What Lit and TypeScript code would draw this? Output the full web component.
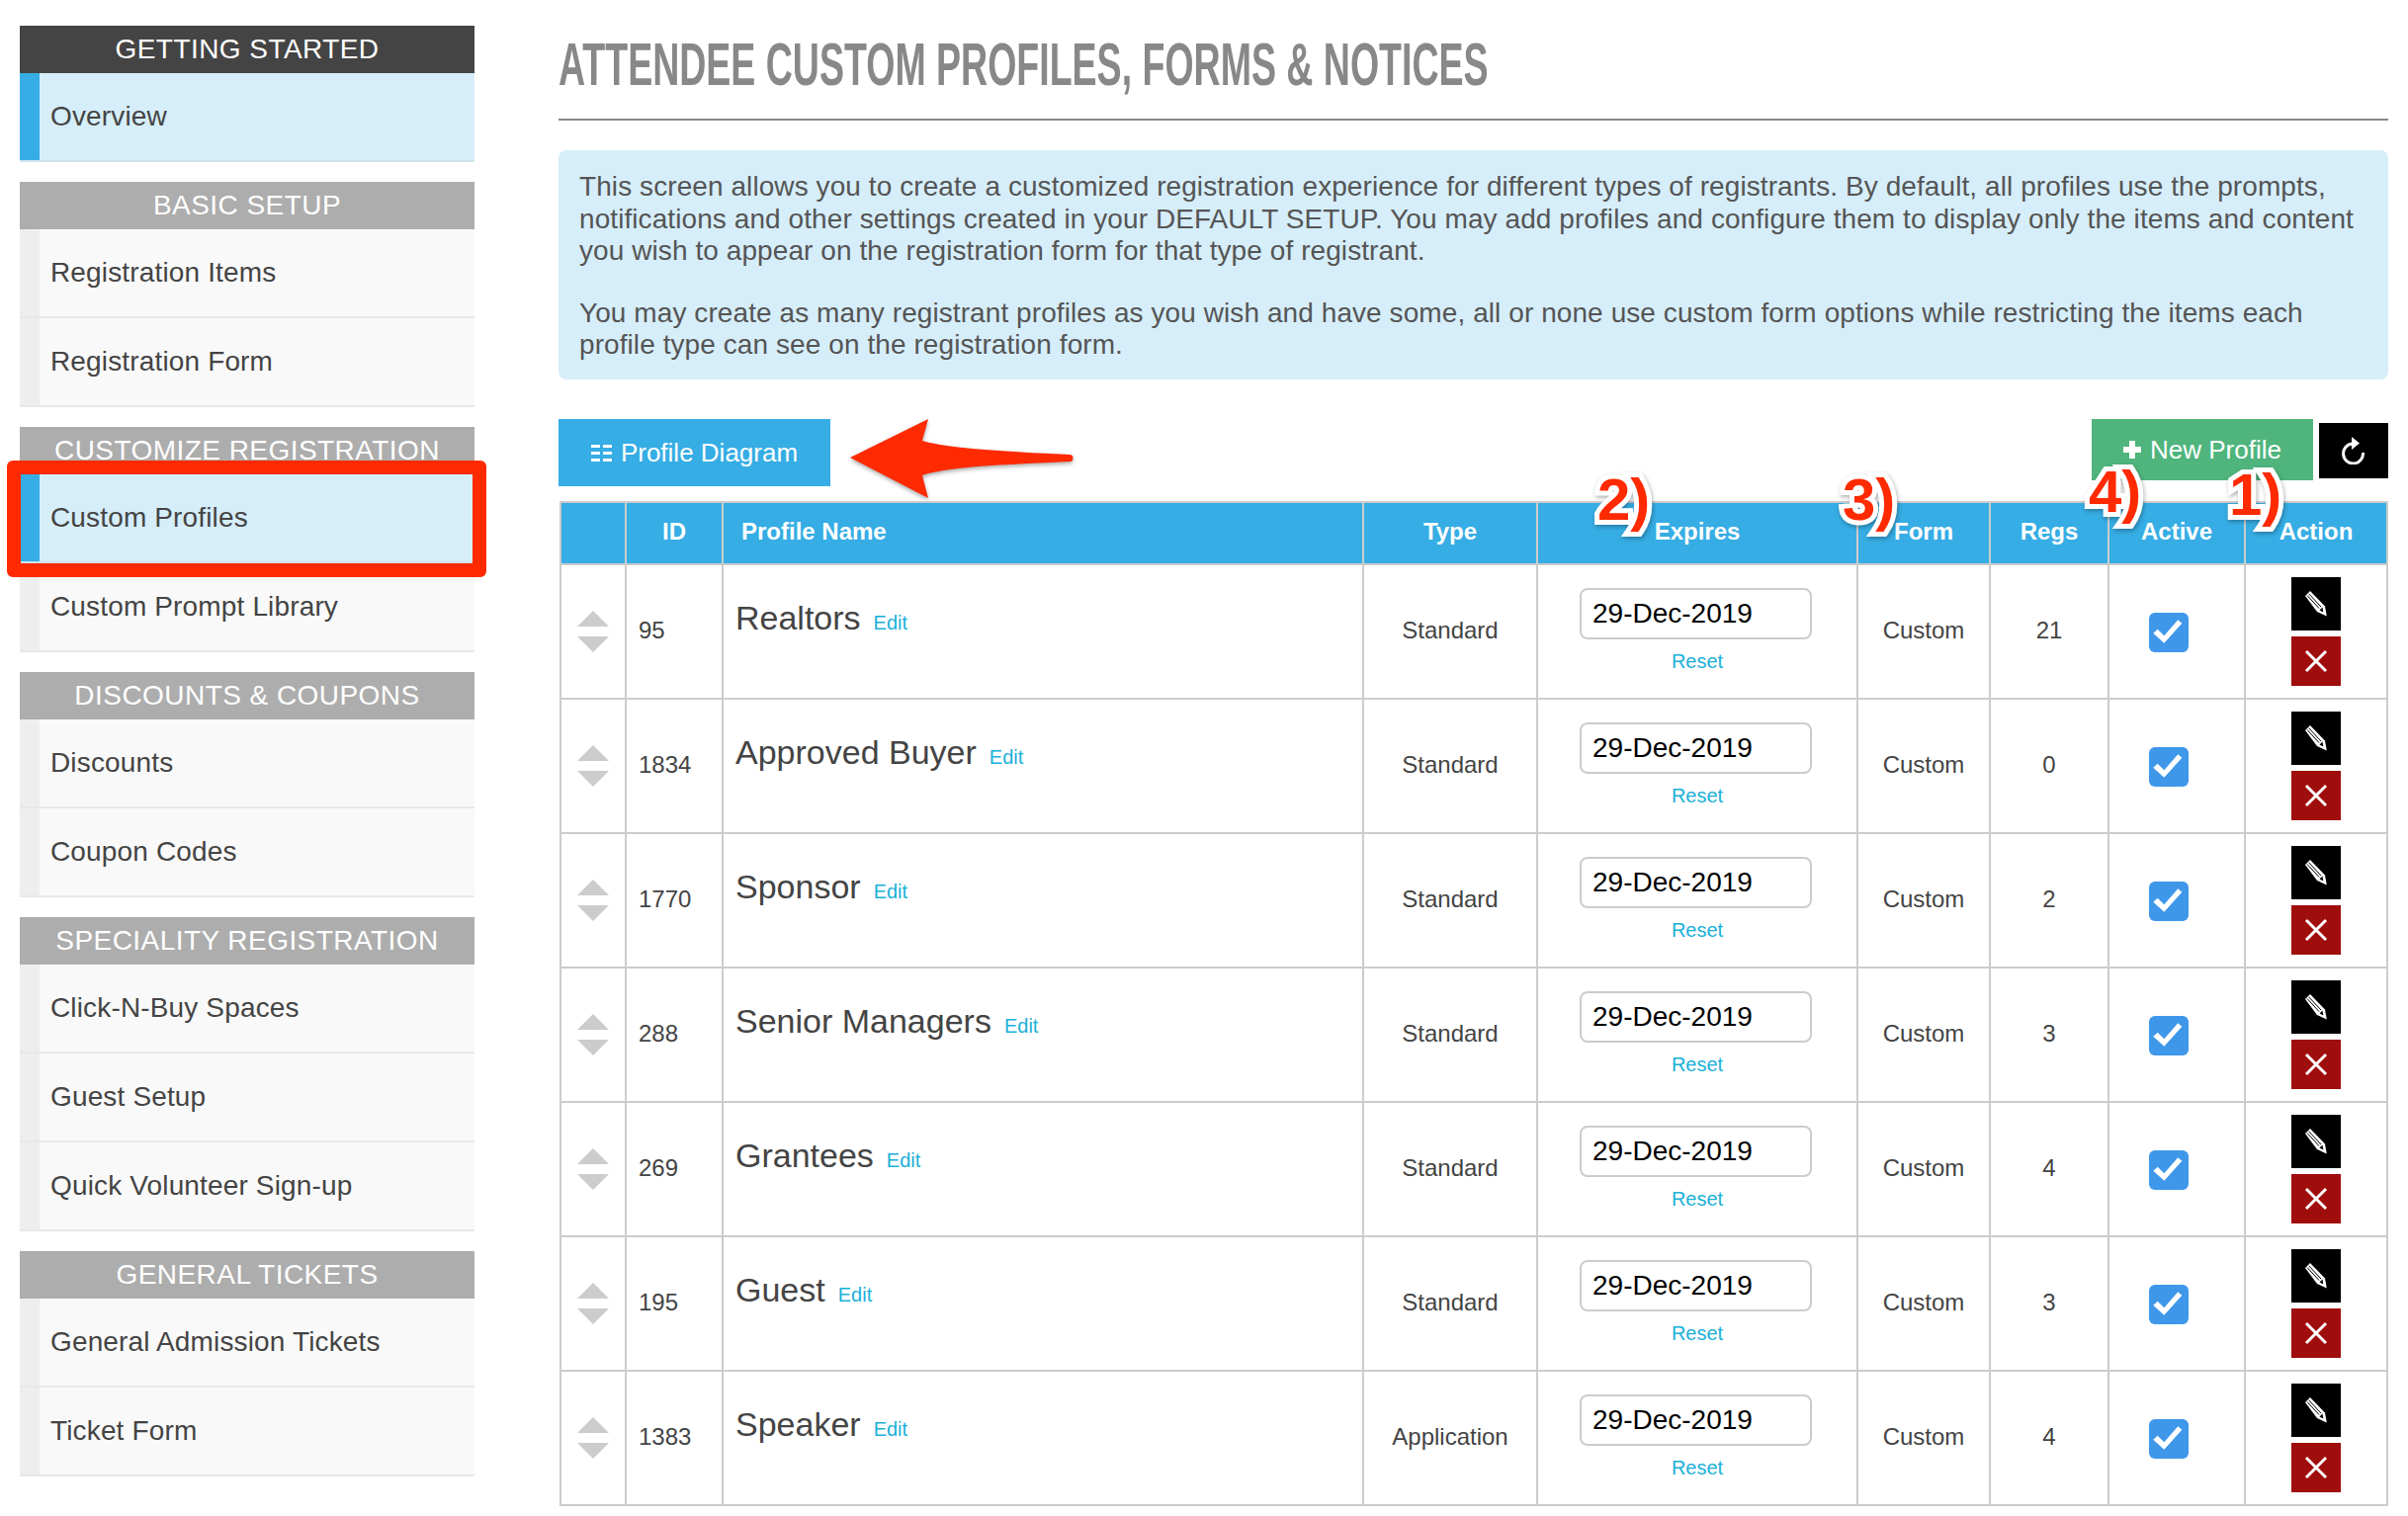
import { LitElement, html, css, svg } from "lit";
import { customElement } from "lit/decorators.js";

const groups = [
  { title: "GETTING STARTED", dark: true, items: [{ t: "Overview", on: true }] },
  { title: "BASIC SETUP", items: [{ t: "Registration Items" }, { t: "Registration Form" }] },
  { title: "CUSTOMIZE REGISTRATION", items: [{ t: "Custom Profiles", on: true, mark: true }, { t: "Custom Prompt Library" }] },
  { title: "DISCOUNTS & COUPONS", items: [{ t: "Discounts" }, { t: "Coupon Codes" }] },
  { title: "SPECIALITY REGISTRATION", items: [{ t: "Click-N-Buy Spaces" }, { t: "Guest Setup" }, { t: "Quick Volunteer Sign-up" }] },
  { title: "GENERAL TICKETS", items: [{ t: "General Admission Tickets" }, { t: "Ticket Form" }] },
] as { title: string; dark?: boolean; items: { t: string; on?: boolean; mark?: boolean }[] }[];

const rows = [
  ["95", "Realtors", "Standard", "21"],
  ["1834", "Approved Buyer", "Standard", "0"],
  ["1770", "Sponsor", "Standard", "2"],
  ["288", "Senior Managers", "Standard", "3"],
  ["269", "Grantees", "Standard", "4"],
  ["195", "Guest", "Standard", "3"],
  ["1383", "Speaker", "Application", "4"],
];

const pencil = svg`<svg width="22" height="26" viewBox="0 0 22 26"><path d="M0 5L5 0 20 15.5 21.8 25.5 12 21z" fill="#fff"/><path d="M2 4.5L14 17.5M3.7 2.8L16 16" stroke="#000" stroke-width="1" fill="none"/><path d="M14.5 19.5L17.5 16.5 18.3 21.5z" fill="#000"/></svg>`;
const cross = svg`<svg width="24" height="24" viewBox="0 0 24 24"><path d="M2 2l20 20M22 2L2 22" stroke="#fff" stroke-width="3"/></svg>`;
const check = svg`<svg width="40" height="40" viewBox="0 0 40 40"><path d="M8.7 16.7L15.3 23.3 29.3 7.3 33.3 10.7 15.3 30.7 4.3 20.7z" fill="#fff"/></svg>`;

@customElement("app-root")
export class AppRoot extends LitElement {
  static styles = css`
    :host { display: block; width: 2436px; height: 1534px; overflow: hidden; background: #fff; font-family: "Liberation Sans", Arial, sans-serif; color: #444; }
    .page { display: flex; gap: 85px; padding: 26px 20px 0; align-items: flex-start; }
    .side { width: 460px; flex: none; display: flex; flex-direction: column; gap: 20px; }
    .ghead { height: 48px; background: #adadad; color: #fff; font-size: 28px; line-height: 48px; text-align: center; letter-spacing: .45px; white-space: nowrap; }
    .ghead.dark { background: #444; }
    .item { position: relative; height: 90px; box-sizing: border-box; display: flex; align-items: center; background: #f9f9f9; border-bottom: 2px solid #e8e8e8; box-shadow: inset 20px 0 0 #eee; padding-left: 31px; font-size: 28px; letter-spacing: .15px; color: #444; }
    .item.on { background: #d6eefa; box-shadow: inset 20px 0 0 #36ade4; border-bottom-color: #d0e3ee; }
    .mark { position: absolute; z-index: 1; left: -13px; top: -14px; right: -12px; bottom: -16px; border: 14px solid #ff2a00; border-radius: 6px; }
    .main { flex: 1; min-width: 0; }
    h1 { margin: 0; height: 96px; box-sizing: border-box; border-bottom: 2px solid #888; font: 700 62px/77px "Liberation Sans", sans-serif; color: #888; white-space: nowrap; }
    h1 span { display: inline-block; transform-origin: left center; transform: scaleX(.605); }
    .info { margin-top: 30px; height: 232px; box-sizing: border-box; background: #d6eefa; border-radius: 8px; padding: 21px 20px 0 21px; font-size: 28px; line-height: 32.5px; letter-spacing: .08px; color: #555; }
    .info p { margin: 0 0 30px; }
    .bar { position: relative; margin-top: 40px; height: 83px; display: flex; align-items: flex-start; }
    .btn { display: flex; align-items: center; justify-content: center; gap: 9px; color: #fff; font-size: 26px; box-sizing: border-box; }
    .diagram { width: 275px; height: 68px; background: #36ade4; }
    .spacer { flex: 1; }
    .newp { width: 224px; height: 62px; background: #4fb57d; }
    .reload { width: 70px; height: 56px; margin-left: 6px; margin-top: 4px; background: #000; display: flex; align-items: center; justify-content: center; }
    .arrow { position: absolute; left: 285px; top: -4px; filter: drop-shadow(0 2px 2px rgba(0,0,0,.35)); }
    .tw { position: relative; margin-left: 1px; }
    table { border-collapse: separate; border-spacing: 0; table-layout: fixed; width: 1850px; border-left: 2px solid #ccc; border-top: 2px solid #ccc; }
    th { background: #36ade4; color: #fff; font-size: 24px; font-weight: 700; height: 63px; padding: 0 0 3px; box-sizing: border-box; border-right: 2px solid #ccc; border-bottom: 2px solid #ccc; text-align: center; }
    th.l { text-align: left; padding-left: 18px; }
    td { height: 136px; padding: 0 0 2px; box-sizing: border-box; border-right: 2px solid #ccc; border-bottom: 2px solid #ccc; text-align: center; font-size: 24px; color: #444; }
    .sort { display: flex; flex-direction: column; align-items: center; gap: 10px; margin-top: 2px; }
    .up { width: 0; height: 0; border: 16px solid transparent; border-top: 0; border-bottom-color: #ccc; }
    .dn { width: 0; height: 0; border: 16px solid transparent; border-bottom: 0; border-top-color: #ccc; }
    td.id { text-align: left; padding-left: 12px; }
    td.name { text-align: left; padding: 0 0 24px 12px; font-size: 34px; line-height: 40px; }
    a { color: #1ab0d8; font-size: 20px; text-decoration: none; }
    td.name a { margin-left: 13px; }
    .date { width: 235px; height: 52px; box-sizing: border-box; margin: 0 0 0 42px; border: 2px solid #ccc; border-radius: 8px; color: #000; font-size: 28px; line-height: 48px; text-align: left; padding-left: 11px; }
    .reset { display: block; margin-top: 9px; line-height: 26px; }
    .box { width: 40px; height: 40px; border-radius: 6px; background: #3f97ea; margin: 4px 0 0 40px; }
    .box svg { display: block; }
    .acts { display: flex; flex-direction: column; align-items: center; gap: 6px; margin-top: 2px; }
    .act { width: 50px; display: flex; align-items: center; justify-content: center; }
    .edit { height: 54px; background: #000; }
    .del { height: 50px; background: #a00d0d; }
    .note { position: absolute; font-size: 60px; line-height: 60px; font-weight: 700; color: #ff2a00; -webkit-text-stroke: 10px #fff; paint-order: stroke fill; filter: drop-shadow(1px 2px 2px rgba(0,0,0,.3)); pointer-events: none; }
  `;

  render() {
    return html`<div class="page">
      <nav class="side">
        ${groups.map((g) => html`<section>
          <div class="ghead ${g.dark ? "dark" : ""}">${g.title}</div>
          ${g.items.map((i) => html`<div class="item ${i.on ? "on" : ""}">${i.t}${i.mark ? html`<div class="mark"></div>` : ""}</div>`)}
        </section>`)}
      </nav>
      <main class="main">
        <h1><span>ATTENDEE CUSTOM PROFILES, FORMS &amp; NOTICES</span></h1>
        <div class="info">
          <p>This screen allows you to create a customized registration experience for different types of registrants. By default, all profiles use the prompts, notifications and other settings created in your DEFAULT SETUP. You may add profiles and configure them to display only the items and content you wish to appear on the registration form for that type of registrant.</p>
          <p>You may create as many registrant profiles as you wish and have some, all or none use custom form options while restricting the items each profile type can see on the registration form.</p>
        </div>
        <div class="bar">
          <div class="btn diagram">
            <svg width="21" height="17" viewBox="0 0 21 17"><path d="M0 0h9v3H0zM12 0h9v3h-9zM0 7h9v3H0zM12 7h9v3h-9zM0 14h9v3H0zM12 14h9v3h-9z" fill="#fff"/></svg>
            Profile Diagram
          </div>
          <svg class="arrow" width="240" height="84" viewBox="0 0 240 84"><path d="M10 43L89 4 83 26C110 34 170 37 232 40a3.5 3.5 0 0 1 0 7C170 50 110 52 83 61L89 84z" fill="#ff2a00"/></svg>
          <div class="spacer"></div>
          <div class="btn newp">
            <svg width="18" height="18" viewBox="0 0 18 18"><path d="M6 0h6v6h6v6h-6v6H6v-6H0V6h6z" fill="#fff"/></svg>
            New Profile
          </div>
          <div class="reload">
            <svg width="24" height="28" viewBox="0 0 24 28"><path d="M11 7A10 10 0 1 0 21.5 16" fill="none" stroke="#fff" stroke-width="3"/><path d="M10 0l8 6.5-8 6.5z" fill="#fff"/></svg>
          </div>
        </div>
        <div class="tw">
          <table>
            <colgroup>
              ${[66, 98, 648, 176, 324, 134, 120, 138, 144].map((w) => html`<col style="width:${w}px" />`)}
            </colgroup>
            <thead>
              <tr><th></th><th>ID</th><th class="l">Profile Name</th><th>Type</th><th>Expires</th><th>Form</th><th>Regs</th><th>Active</th><th>Action</th></tr>
            </thead>
            <tbody>
              ${rows.map((r) => html`<tr>
                <td><div class="sort"><div class="up"></div><div class="dn"></div></div></td>
                <td class="id">${r[0]}</td>
                <td class="name">${r[1]}<a>Edit</a></td>
                <td>${r[2]}</td>
                <td><div class="date">29-Dec-2019</div><a class="reset">Reset</a></td>
                <td>Custom</td>
                <td>${r[3]}</td>
                <td><div class="box">${check}</div></td>
                <td><div class="acts"><div class="act edit">${pencil}</div><div class="act del">${cross}</div></div></td>
              </tr>`)}
            </tbody>
          </table>
          <div class="note" style="left:1050px;top:-31px">2)</div>
          <div class="note" style="left:1298px;top:-31px">3)</div>
          <div class="note" style="left:1547px;top:-39px">4)</div>
          <div class="note" style="left:1689px;top:-36px">1)</div>
        </div>
      </main>
    </div>`;
  }
}
